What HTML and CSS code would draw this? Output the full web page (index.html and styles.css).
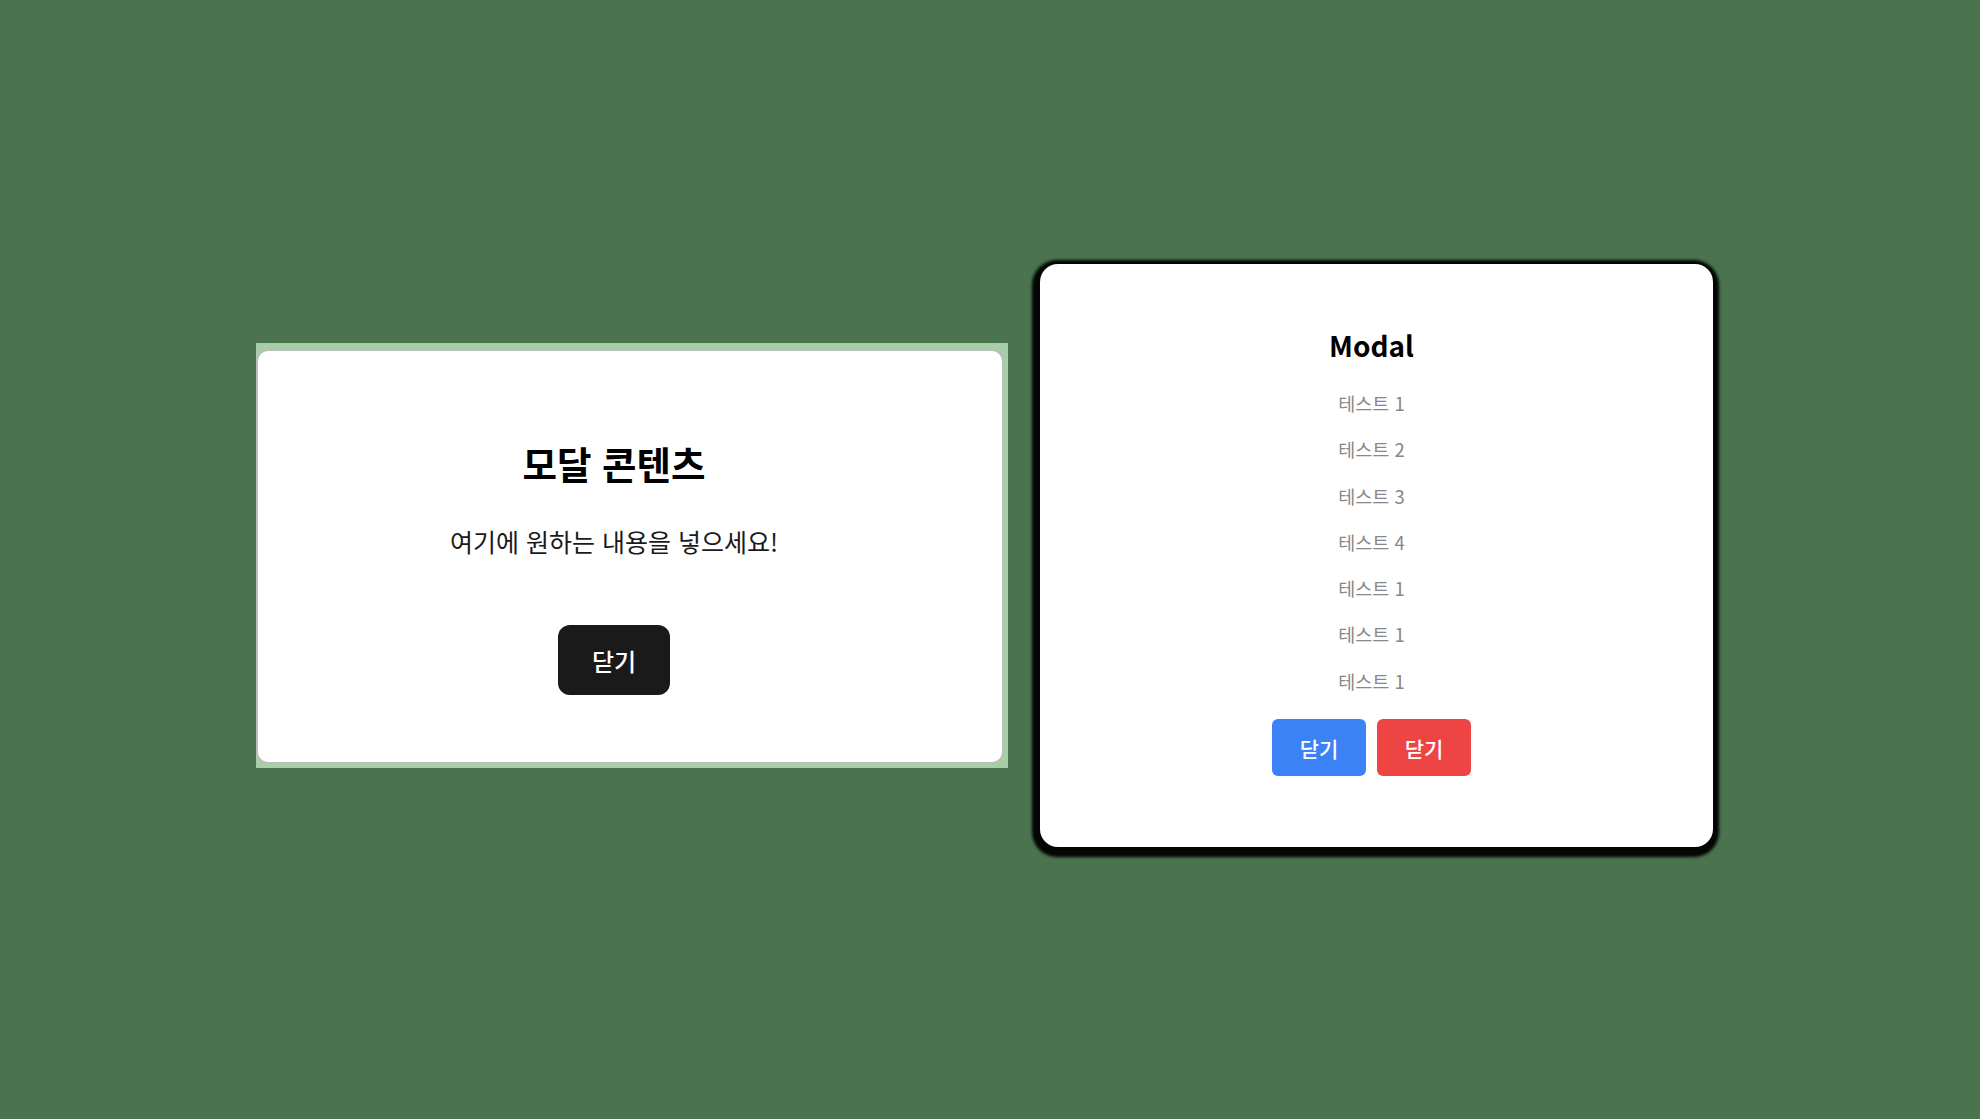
FILE: index.html
```html
<!DOCTYPE html>
<html lang="ko">
<head>
    <meta charset="UTF-8">
    <meta name="viewport" content="width=device-width, initial-scale=1.0">
    <title>Modal</title>
    <link rel="stylesheet" href="styles.css">
</head>
<body>
    <div class="stage">
        <!-- 첫번째 모달 -->
        <div class="modal-frame">
            <div class="modal-basic">
                <h2 class="modal-title">모달 콘텐츠</h2>
                <p class="modal-text">여기에 원하는 내용을 넣으세요!</p>
                <button class="btn-dark">닫기</button>
            </div>
        </div>

        <!-- 두번째 모달 -->
        <div class="modal-list">
            <h2 class="list-title">Modal</h2>
            <ul class="list-items">
                <li>테스트 1</li>
                <li>테스트 2</li>
                <li>테스트 3</li>
                <li>테스트 4</li>
                <li>테스트 1</li>
                <li>테스트 1</li>
                <li>테스트 1</li>
            </ul>
            <div class="list-buttons">
                <button class="btn btn-blue">닫기</button>
                <button class="btn btn-red">닫기</button>
            </div>
        </div>
    </div>
</body>
</html>
```

FILE: styles.css
```css
body {
    margin: 0;
    padding: 0;
    background-color: #4a734e;
    font-family: "Noto Sans CJK KR", "Noto Sans", sans-serif;
}

.stage {
    min-height: 100vh;
    box-sizing: border-box;
    padding: 0 0 8px 256px;
    display: flex;
    align-items: center;
    gap: 32px;
}

/* 첫번째 모달 */
.modal-frame {
    background-color: #a6cfa8;
    padding: 6px 4px 4px 0;
}

.modal-basic {
    width: 748px;
    box-sizing: border-box;
    background-color: #fff;
    border: 2px solid #bdbdbd;
    border-radius: 12px;
    padding: 88px 56px 67px 24px;
    display: flex;
    flex-direction: column;
    align-items: center;
}

.modal-title {
    margin: 0;
    font-size: 37.5px;
    line-height: 48px;
    font-weight: 700;
    color: #000;
}

.modal-text {
    margin: 36px 0 0;
    font-size: 25px;
    line-height: 36px;
    color: #1a1a1a;
}

.btn-dark {
    margin-top: 66px;
    width: 112px;
    height: 70px;
    background-color: #1a1a1a;
    color: #fff;
    border: none;
    border-radius: 12px;
    font-family: inherit;
    font-size: 24px;
    font-weight: 500;
    cursor: pointer;
}

/* 두번째 모달 */
.modal-list {
    width: 673px;
    box-sizing: border-box;
    background-color: #fff;
    border-radius: 18px;
    box-shadow: -1px 3px 3px 7px #050505;
    padding: 61px 10px 71px 0;
    display: flex;
    flex-direction: column;
    align-items: center;
}

.list-title {
    margin: 0;
    font-size: 28px;
    line-height: 40px;
    font-weight: 700;
    color: #000;
}

.list-items {
    list-style: none;
    margin: 15px 0 0;
    padding: 0;
    text-align: center;
}

.list-items li {
    font-size: 18.5px;
    line-height: 46.3px;
    color: #888;
}

.list-buttons {
    margin-top: 15px;
    display: flex;
    gap: 11px;
}

.btn {
    width: 94px;
    height: 57px;
    border: none;
    border-radius: 6px;
    color: #fff;
    font-family: inherit;
    font-size: 21px;
    font-weight: 500;
    cursor: pointer;
}

.btn-blue {
    background-color: #3b82f6;
}

.btn-red {
    background-color: #ef4444;
}
```
